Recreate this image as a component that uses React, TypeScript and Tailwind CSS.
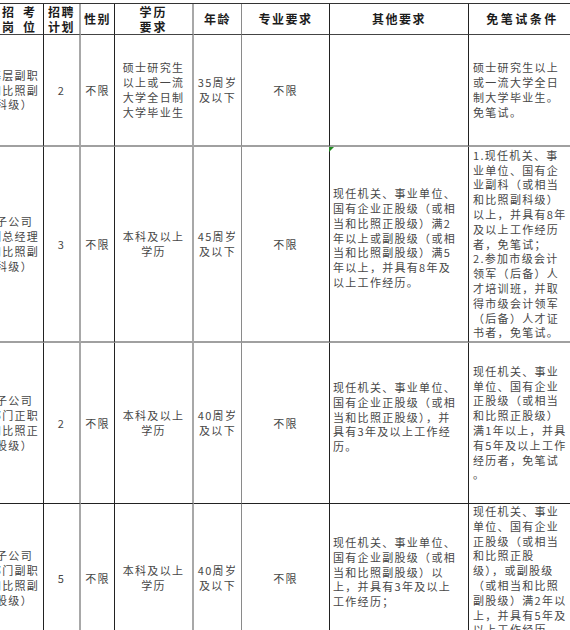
import React from "react";

const colR = [
  "border-r border-r-[#222]",
  "border-r-2 border-r-[#a8a8a8]",
  "border-r border-r-[#222]",
  "border-r-2 border-r-[#a8a8a8]",
  "border-r border-r-[#8a8a8a]",
  "border-r border-r-[#222]",
  "border-r border-r-[#222]",
  "",
];

const rowB = [
  "border-b border-b-[#444]",
  "border-b-2 border-b-[#a0a0a0]",
  "border-b-2 border-b-[#a0a0a0]",
  "border-b border-b-[#222]",
  "border-b-2 border-b-[#a0a0a0]",
];

type Row = string[][];

const rows: Row[] = [
  [
    ["基层副职", "和比照副", "科级）"],
    ["2"],
    ["不限"],
    ["硕士研究生", "以上或一流", "大学全日制", "大学毕业生"],
    ["35周岁", "及以下"],
    ["不限"],
    [],
    ["硕士研究生以上", "或一流大学全日", "制大学毕业生。", "免笔试。"],
  ],
  [
    ["子公司", "副总经理", "和比照副", "科级）"],
    ["3"],
    ["不限"],
    ["本科及以上", "学历"],
    ["45周岁", "及以下"],
    ["不限"],
    [
      "现任机关、事业单位、",
      "国有企业正股级（或相",
      "当和比照正股级）满2",
      "年以上或副股级（或相",
      "当和比照副股级）满5",
      "年以上，并具有8年及",
      "以上工作经历。",
    ],
    [
      "1.现任机关、事",
      "业单位、国有企",
      "业副科（或相当",
      "和比照副科级）",
      "以上，并具有8年",
      "及以上工作经历",
      "者，免笔试；",
      "2.参加市级会计",
      "领军（后备）人",
      "才培训班，并取",
      "得市级会计领军",
      "（后备）人才证",
      "书者，免笔试。",
    ],
  ],
  [
    ["子公司", "部门正职", "和比照正", "股级）"],
    ["2"],
    ["不限"],
    ["本科及以上", "学历"],
    ["40周岁", "及以下"],
    ["不限"],
    [
      "现任机关、事业单位、",
      "国有企业正股级（或相",
      "当和比照正股级），并",
      "具有3年及以上工作经",
      "历。",
    ],
    [
      "现任机关、事业",
      "单位、国有企业",
      "正股级（或相当",
      "和比照正股级）",
      "满1年以上，并具",
      "有5年及以上工作",
      "经历者，免笔试",
      "。",
    ],
  ],
  [
    ["子公司", "部门副职", "和比照副", "股级）"],
    ["5"],
    ["不限"],
    ["本科及以上", "学历"],
    ["40周岁", "及以下"],
    ["不限"],
    [
      "现任机关、事业单位、",
      "国有企业副股级（或相",
      "当和比照副股级）以",
      "上，并具有3年及以上",
      "工作经历；",
    ],
    [
      "现任机关、事业",
      "单位、国有企业",
      "正股级（或相当",
      "和比照正股",
      "级），或副股级",
      "（或相当和比照",
      "副股级）满2年以",
      "上，并具有5年及",
      "以上工作经历",
      "者，免笔试。",
    ],
  ],
];

function Lines({ lines }: { lines: string[] }) {
  return (
    <div>
      {lines.map((l, i) => (
        <div key={i} className="whitespace-nowrap">
          {l}
        </div>
      ))}
    </div>
  );
}

const header: { lines: string[]; extra: string }[] = [
  { lines: ["招考", "岗位"], extra: "tracking-[9px] pl-[17px]" },
  { lines: ["招聘", "计划"], extra: "tracking-[1.5px]" },
  { lines: ["性别"], extra: "tracking-[1.5px]" },
  { lines: ["学历", "要求"], extra: "tracking-[2px]" },
  { lines: ["年龄"], extra: "tracking-[1.5px]" },
  { lines: ["专业要求"], extra: "tracking-[1.5px]" },
  { lines: ["其他要求"], extra: "tracking-[1.5px]" },
  { lines: ["免笔试条件"], extra: "tracking-[2.5px]" },
];

export default function App() {
  return (
    <div className="w-[570px] h-[630px] overflow-hidden bg-white font-['Noto_Sans_CJK_SC','Liberation_Sans',sans-serif]">
      <div className="pt-[3px] -ml-[14px] w-[590px]">
        <div className="grid grid-cols-[58px_37px_34px_79px_48px_88px_139px_107px] grid-rows-[31px_112px_196px_161px_150px] border-t border-t-[#333]">
          {header.map((h, c) => (
            <div
              key={"h" + c}
              className={`flex items-center justify-center text-center text-[12px] leading-[14.5px] font-bold text-[#1c1c1c] pt-[1px] ${h.extra} ${colR[c]} ${rowB[0]}`}
            >
              <Lines lines={h.lines} />
            </div>
          ))}
          {rows.map((row, r) =>
            row.map((cell, c) => {
              const left = c >= 6;
              const pad =
                c === 6 ? "pl-[3px] pb-[12px]" : c === 7 ? "pl-[4px]" : "";
              return (
                <div
                  key={r + "-" + c}
                  className={`relative flex items-center text-[11px] leading-[14.8px] tracking-[1.3px] text-[#474747] ${
                    left ? "justify-start text-left" : "justify-center text-center"
                  } ${pad} ${colR[c]} ${rowB[r + 1]}`}
                >
                  {r === 1 && c === 6 && (
                    <span className="absolute left-[-1px] top-0 w-0 h-0 border-t-[5px] border-t-[#1f8a1f] border-r-[5px] border-r-transparent" />
                  )}
                  <Lines lines={cell} />
                </div>
              );
            })
          )}
        </div>
      </div>
    </div>
  );
}
